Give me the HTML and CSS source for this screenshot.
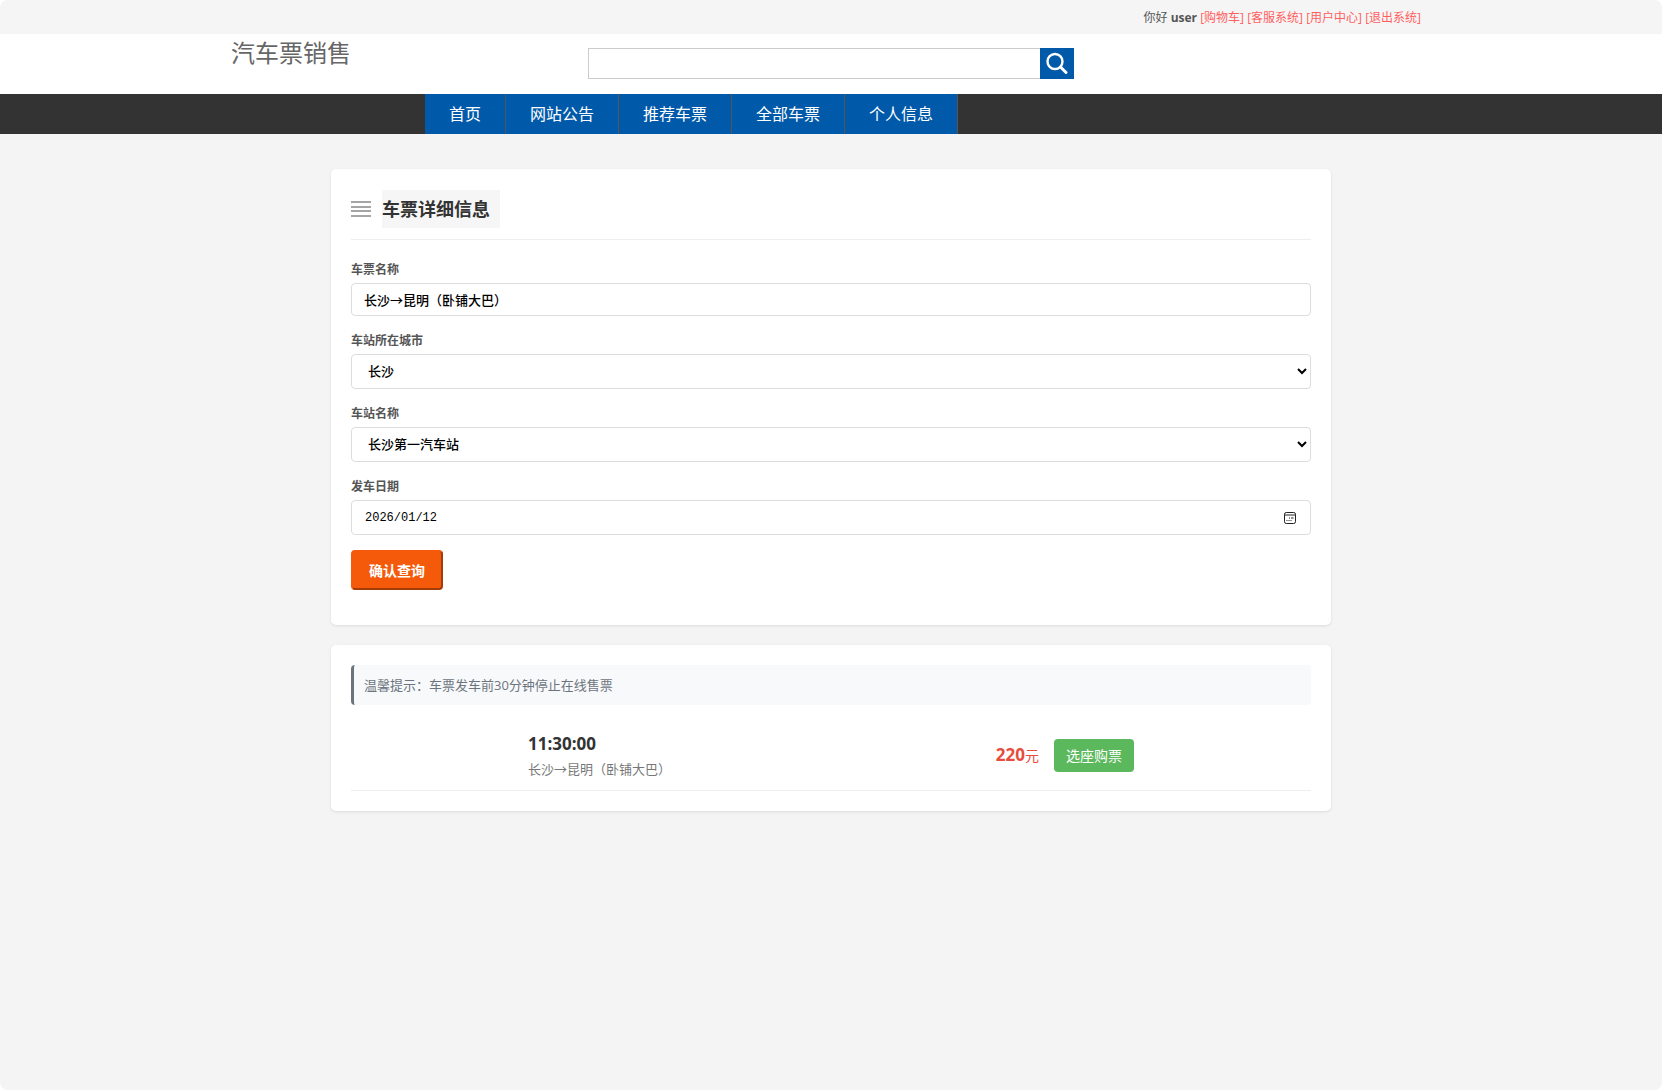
FILE: index.html
```html
<!DOCTYPE html>
<html lang="zh-CN">
<head>
  <meta charset="utf-8">
  <meta name="viewport" content="width=device-width, initial-scale=1">
  <title>汽车票销售</title>
  <link rel="stylesheet" href="styles.css">
</head>
<body>
  <div class="topbar">
    <div class="container topbar-inner">
      你好 <strong>user</strong>
      <a href="#">[购物车]</a>
      <a href="#">[客服系统]</a>
      <a href="#">[用户中心]</a>
      <a href="#">[退出系统]</a>
    </div>
  </div>

  <header class="header">
    <div class="container header-inner">
      <div class="logo">汽车票销售</div>
      <form class="search">
        <input class="search-input" type="text" aria-label="搜索">
        <button class="search-button" type="button" aria-label="搜索">
          <svg width="24" height="24" viewBox="0 0 24 24" fill="none" stroke="#fff">
            <circle cx="10" cy="9.500" r="7.500" stroke-width="2.400"/>
            <path d="M15.500 15l5.500 5.500" stroke-width="3" stroke-linecap="round"/>
          </svg>
        </button>
      </form>
    </div>
  </header>

  <nav class="nav">
    <div class="container nav-inner">
      <a href="#">首页</a>
      <a href="#">网站公告</a>
      <a href="#">推荐车票</a>
      <a href="#">全部车票</a>
      <a href="#">个人信息</a>
    </div>
  </nav>

  <main class="main">
    <section class="card">
      <div class="card-head">
        <svg width="20" height="16" viewBox="0 0 20 16" fill="#a5a5a5">
          <path d="M0 0h20v2H0zM0 5h20v2H0zM0 9h20v2H0zM0 14h20v2H0z"/>
        </svg>
        <h1 class="card-title">车票详细信息</h1>
      </div>
      <form>
        <div class="field">
          <label for="name">车票名称</label>
          <input class="control" id="name" type="text" value="长沙→昆明（卧铺大巴）">
        </div>
        <div class="field">
          <label for="city">车站所在城市</label>
          <select class="control control-tall" id="city"><option>长沙</option></select>
        </div>
        <div class="field">
          <label for="station">车站名称</label>
          <select class="control control-tall" id="station"><option>长沙第一汽车站</option></select>
        </div>
        <div class="field">
          <label for="date">发车日期</label>
          <div class="control control-tall date">
            <input class="date-input" id="date" type="text" value="2026/01/12">
            <button class="date-button" type="button" aria-label="选择日期">
              <svg width="12" height="12" viewBox="0 0 12 12" fill="none" stroke="#222">
                <rect x=".5" y=".5" width="11" height="11" rx="1.800"/>
                <path d="M.5 3h11"/>
                <path d="M5 6h1M7 6h2.500M2.500 8.500h1M4.500 8.500h1M6.500 8.500h1" stroke-width="1.200"/>
              </svg>
            </button>
          </div>
        </div>
        <button class="submit" type="button">确认查询</button>
      </form>
    </section>

    <section class="card">
      <p class="tip">温馨提示：车票发车前30分钟停止在线售票</p>
      <div class="trip">
        <div>
          <div class="trip-time">11:30:00</div>
          <div class="trip-route">长沙→昆明（卧铺大巴）</div>
        </div>
        <div class="trip-buy">
          <span class="price"><strong>220</strong>元</span>
          <button class="buy" type="button">选座购票</button>
        </div>
      </div>
    </section>
  </main>
</body>
</html>
```
FILE: styles.css
```css
* {
  box-sizing: border-box;
}

html {
  background: #fff;
}

body {
  margin: 0;
  min-height: 100vh;
  border-radius: 8px;
  background: #f4f4f4;
  color: #555;
  font-family: "Open Sans", "Noto Sans CJK SC", sans-serif;
  font-size: 12px;
  line-height: 18px;
}

input,
select,
button {
  font-family: inherit;
}

.container {
  max-width: 1200px;
  margin: 0 auto;
}

.topbar {
  border-radius: 8px 8px 0 0;
  background: #f5f5f5;
}

.topbar-inner {
  padding: 9px 10px 7px;
  text-align: right;
}

.topbar a {
  color: #ff5f5f;
  text-decoration: none;
}

.header {
  background: #fff;
}

.header-inner {
  display: grid;
  grid-template-columns: 1fr 486px 1fr;
  height: 60px;
}

.logo {
  color: #666;
  font-size: 24px;
  line-height: 38px;
}

.search {
  display: flex;
  height: 31px;
  margin-top: 14px;
}

.search-input {
  flex: 1;
  min-width: 0;
  border: 1px solid #ccc;
  border-right: 0;
  padding: 0 8px;
}

.search-button {
  display: flex;
  align-items: center;
  justify-content: center;
  width: 34px;
  padding: 0;
  border: 0;
  background: #0059a9;
}

.nav {
  background: #333;
}

.nav-inner {
  display: flex;
  padding-left: 194px;
}

.nav a {
  padding: 0 24px;
  border-right: 1px solid #555;
  background: #0059a9;
  color: #fff;
  font-size: 16px;
  line-height: 40px;
  text-decoration: none;
}

.main {
  display: grid;
  gap: 20px;
  max-width: 1000px;
  margin: 0 auto;
  padding: 35px 0;
}

.card {
  padding: 20px;
  border-radius: 5px;
  background: #fff;
  box-shadow: 0 1px 3px rgba(0, 0, 0, 0.1);
}

.card-head {
  display: flex;
  align-items: center;
  gap: 11px;
  height: 51px;
  margin-bottom: 20px;
  padding-bottom: 10px;
  border-bottom: 1px solid #eee;
}

.card-title {
  margin: 0;
  padding-right: 10px;
  background: #f6f6f6;
  color: #333;
  font-size: 18px;
  line-height: 38px;
}

.field {
  margin-bottom: 15px;
}

.field label {
  display: block;
  margin-bottom: 3px;
  font-weight: 700;
  line-height: 20px;
}

.control {
  display: block;
  width: 100%;
  height: 33px;
  padding: 0 12px;
  border: 1px solid #ddd;
  border-radius: 4px;
  background: #fff;
  color: #000;
  font-size: 13px;
  font-weight: 500;
}

.control-tall {
  height: 35px;
}

select.control {
  padding-bottom: 2px;
}

.date {
  display: flex;
  align-items: center;
  padding-right: 14px;
}

.date-input {
  flex: 1;
  min-width: 0;
  padding: 1px 1px 0;
  border: 0;
  background: none;
  font-family: "Liberation Mono", monospace;
  font-size: 12px;
}

.date-button {
  display: flex;
  padding: 0;
  border: 0;
  background: none;
}

.submit {
  display: block;
  height: 40px;
  margin-bottom: 15px;
  padding: 0 16px;
  border: 2px solid #f55a0a;
  border-right-color: #a33c06;
  border-bottom-color: #a33c06;
  border-radius: 4px;
  background: #f55a0a;
  color: #fff;
  font-size: 14px;
  font-weight: 700;
}

.tip {
  margin: 0 0 15px;
  padding: 0 10px;
  border-left: 3px solid #6c757d;
  border-radius: 4px;
  background: #f8f9fb;
  color: #6c757d;
  font-size: 13px;
  line-height: 40px;
}

.trip {
  display: flex;
  align-items: center;
  justify-content: space-between;
  padding: 10px 177px;
  border-bottom: 1px solid #eee;
}

.trip-time {
  color: #333;
  font-size: 17px;
  font-weight: 700;
  line-height: 28px;
}

.trip-route {
  color: #777;
  font-size: 13px;
  line-height: 22px;
}

.trip-buy {
  display: flex;
  align-items: center;
  gap: 15px;
}

.price {
  color: #e74c3c;
  font-size: 14px;
}

.price strong {
  font-size: 17px;
}

.buy {
  height: 33px;
  padding: 0 12px;
  border: 0;
  border-radius: 4px;
  background: #5cb85c;
  color: #fff;
  font-size: 14px;
}
```
